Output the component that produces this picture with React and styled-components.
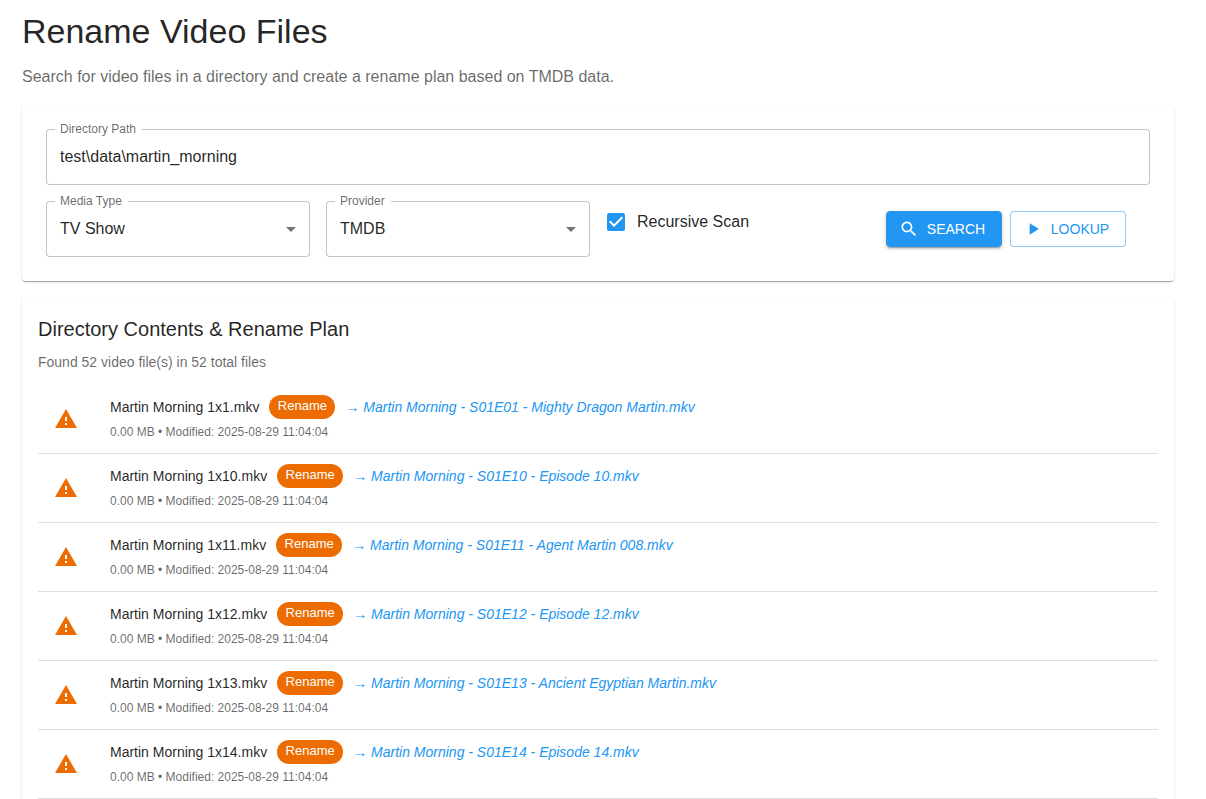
import React, { useState } from "react";
import styled, { createGlobalStyle } from "styled-components";

const PageStyle = createGlobalStyle`
  *, *::before, *::after { box-sizing: border-box; }
  body {
    margin: 0;
    background: #fff;
    color: rgba(0, 0, 0, 0.87);
    font-family: "Liberation Sans", Arial, Helvetica, sans-serif;
    font-size: 16px;
    line-height: 24px;
  }
`;

const Page = styled.main`
  display: flex;
  flex-direction: column;
  gap: 16px;
  padding: 10px 32px 24px 22px;
`;

const Header = styled.header`
  display: flex;
  flex-direction: column;
  gap: 13px;
`;

const Title = styled.h1`
  margin: 0;
  font-size: 34px;
  font-weight: 400;
  line-height: 42px;
`;

const Intro = styled.p`
  margin: 0;
  color: rgba(0, 0, 0, 0.6);
`;

const Card = styled.section`
  padding: ${(p) => p.$padding};
  border-radius: 4px;
  background: #fff;
  box-shadow: 0 2px 1px -1px rgba(0, 0, 0, 0.2), 0 1px 1px 0 rgba(0, 0, 0, 0.14),
    0 1px 3px 0 rgba(0, 0, 0, 0.12);
`;

const SearchForm = styled.form`
  display: grid;
  grid-template-columns: repeat(4, minmax(0, 1fr));
  gap: 16px;
`;

const Field = styled.div`
  position: relative;
  display: flex;
  align-items: center;
  grid-column: ${(p) => (p.$wide ? "1 / -1" : "auto")};
`;

const FieldLabel = styled.label`
  position: absolute;
  top: -8px;
  left: 9px;
  padding: 0 6px 0 5px;
  background: #fff;
  color: rgba(0, 0, 0, 0.6);
  font-size: 12px;
  line-height: 16px;
`;

const TextInput = styled.input`
  width: 100%;
  height: 56px;
  padding: 0 13px;
  border: 1px solid rgba(0, 0, 0, 0.23);
  border-radius: 4px;
  background: #fff;
  color: inherit;
  font: inherit;
`;

const SelectInput = styled(TextInput)`
  padding-right: 32px;
  appearance: none;
`;

const SelectArrow = styled.svg`
  position: absolute;
  right: 7px;
  width: 24px;
  height: 24px;
  fill: rgba(0, 0, 0, 0.54);
  pointer-events: none;
`;

const CheckLabel = styled.label`
  display: flex;
  align-items: center;
  align-self: start;
  gap: 12px;
  height: 42px;
  padding-left: 1px;
`;

const CheckBox = styled.span`
  position: relative;
  display: flex;
`;

const CheckInput = styled.input`
  width: 18px;
  height: 18px;
  margin: 0;
  border: 2px solid rgba(0, 0, 0, 0.6);
  border-radius: 2px;
  appearance: none;
  &:checked {
    border-color: #2196f3;
    background: #2196f3;
  }
`;

const CheckMark = styled.svg`
  position: absolute;
  inset: 0;
  fill: #fff;
  pointer-events: none;
`;

const Actions = styled.div`
  display: flex;
  align-items: center;
  gap: 8px;
`;

const ActionButton = styled.button`
  display: flex;
  align-items: center;
  justify-content: center;
  gap: 8px;
  min-width: 116px;
  height: 36px;
  padding: 0 15px 0 11px;
  border: 1px solid ${(p) => (p.$filled ? "#2196f3" : "rgba(33, 150, 243, 0.5)")};
  border-radius: 4px;
  background: ${(p) => (p.$filled ? "#2196f3" : "#fff")};
  color: ${(p) => (p.$filled ? "#fff" : "#2196f3")};
  box-shadow: ${(p) =>
    p.$filled
      ? "0 3px 1px -2px rgba(0,0,0,0.2), 0 2px 2px 0 rgba(0,0,0,0.14), 0 1px 5px 0 rgba(0,0,0,0.12)"
      : "none"};
  font-family: inherit;
  font-size: 14px;
  line-height: 24px;
  text-transform: uppercase;
`;

const ButtonIcon = styled.svg`
  flex: none;
  width: 20px;
  height: 20px;
  fill: currentColor;
`;

const PlanHeader = styled.div`
  display: flex;
  flex-direction: column;
  gap: 7px;
`;

const PlanTitle = styled.h2`
  margin: 0;
  font-size: 20px;
  font-weight: 400;
  line-height: 32px;
`;

const PlanSummary = styled.p`
  margin: 0;
  color: rgba(0, 0, 0, 0.6);
  font-size: 14px;
  line-height: 20px;
`;

const FileList = styled.ul`
  margin: 0;
  padding: 13px 0 8px;
  list-style: none;
`;

const FileRow = styled.li`
  display: flex;
  align-items: center;
  gap: 32px;
  padding: 10px 16px 11px;
  border-bottom: 1px solid rgba(0, 0, 0, 0.12);
`;

const WarningIcon = styled.svg`
  flex: none;
  width: 24px;
  height: 24px;
  fill: #ed6c02;
`;

const FileDetails = styled.div`
  display: flex;
  flex-direction: column;
  gap: 3px;
`;

const FileLine = styled.div`
  display: flex;
  align-items: center;
  gap: 10px;
  height: 24px;
  font-size: 14px;
`;

const Chip = styled.span`
  min-width: 66px;
  height: 24px;
  padding: 0 8px;
  border-radius: 12px;
  background: #ed6c02;
  color: #fff;
  font-size: 13px;
  line-height: 22px;
  text-align: center;
`;

const NewName = styled.span`
  color: #2196f3;
  font-style: italic;
`;

const Arrow = styled.span`
  font-family: "Liberation Serif", "Times New Roman", serif;
  font-style: normal;
`;

const FileMeta = styled.span`
  color: rgba(0, 0, 0, 0.6);
  font-size: 12px;
  line-height: 20px;
`;

const files = [
  ["Martin Morning 1x1.mkv", "Martin Morning - S01E01 - Mighty Dragon Martin.mkv"],
  ["Martin Morning 1x10.mkv", "Martin Morning - S01E10 - Episode 10.mkv"],
  ["Martin Morning 1x11.mkv", "Martin Morning - S01E11 - Agent Martin 008.mkv"],
  ["Martin Morning 1x12.mkv", "Martin Morning - S01E12 - Episode 12.mkv"],
  ["Martin Morning 1x13.mkv", "Martin Morning - S01E13 - Ancient Egyptian Martin.mkv"],
  ["Martin Morning 1x14.mkv", "Martin Morning - S01E14 - Episode 14.mkv"],
];

function SelectField({ id, label, options }) {
  return (
    <Field>
      <SelectInput as="select" id={id} defaultValue={options[0]}>
        {options.map((option) => (
          <option key={option}>{option}</option>
        ))}
      </SelectInput>
      <SelectArrow viewBox="0 0 24 24" aria-hidden="true">
        <path d="M7 10l5 5 5-5z" />
      </SelectArrow>
      <FieldLabel htmlFor={id}>{label}</FieldLabel>
    </Field>
  );
}

function FileItem({ name, newName }) {
  return (
    <FileRow>
      <WarningIcon viewBox="0 0 24 24" aria-hidden="true">
        <path d="M1 21h22L12 2 1 21zm12-3h-2v-2h2v2zm0-4h-2v-4h2v4z" />
      </WarningIcon>
      <FileDetails>
        <FileLine>
          <span>{name}</span>
          <Chip>Rename</Chip>
          <NewName>
            <Arrow>→</Arrow> {newName}
          </NewName>
        </FileLine>
        <FileMeta>0.00 MB • Modified: 2025-08-29 11:04:04</FileMeta>
      </FileDetails>
    </FileRow>
  );
}

export default function App() {
  const [path, setPath] = useState("test\\data\\martin_morning");
  const [recursive, setRecursive] = useState(true);

  return (
    <>
      <PageStyle />
      <Page>
        <Header>
          <Title>Rename Video Files</Title>
          <Intro>
            Search for video files in a directory and create a rename plan based on TMDB data.
          </Intro>
        </Header>

        <Card $padding="24px">
          <SearchForm onSubmit={(e) => e.preventDefault()}>
            <Field $wide>
              <TextInput
                id="directory"
                type="text"
                value={path}
                onChange={(e) => setPath(e.target.value)}
              />
              <FieldLabel htmlFor="directory">Directory Path</FieldLabel>
            </Field>
            <SelectField id="media-type" label="Media Type" options={["TV Show"]} />
            <SelectField id="provider" label="Provider" options={["TMDB"]} />
            <CheckLabel>
              <CheckBox>
                <CheckInput
                  type="checkbox"
                  checked={recursive}
                  onChange={(e) => setRecursive(e.target.checked)}
                />
                {recursive && (
                  <CheckMark viewBox="3 3 18 18" aria-hidden="true">
                    <path d="M10 17l-5-5 1.41-1.41L10 14.17l7.59-7.59L19 8l-9 9z" />
                  </CheckMark>
                )}
              </CheckBox>
              Recursive Scan
            </CheckLabel>
            <Actions>
              <ActionButton type="submit" $filled>
                <ButtonIcon viewBox="0 0 24 24" aria-hidden="true">
                  <path d="M15.5 14h-.79l-.28-.27C15.41 12.59 16 11.11 16 9.5 16 5.91 13.09 3 9.5 3S3 5.91 3 9.5 5.91 16 9.5 16c1.61 0 3.09-.59 4.23-1.57l.27.28v.79l5 4.99L20.49 19l-4.99-5zm-6 0C7.01 14 5 11.99 5 9.5S7.01 5 9.5 5 14 7.01 14 9.5 11.99 14 9.5 14z" />
                </ButtonIcon>
                Search
              </ActionButton>
              <ActionButton type="button">
                <ButtonIcon viewBox="0 0 24 24" aria-hidden="true">
                  <path d="M8 5v14l11-7z" />
                </ButtonIcon>
                Lookup
              </ActionButton>
            </Actions>
          </SearchForm>
        </Card>

        <Card $padding="16px">
          <PlanHeader>
            <PlanTitle>Directory Contents &amp; Rename Plan</PlanTitle>
            <PlanSummary>Found 52 video file(s) in 52 total files</PlanSummary>
          </PlanHeader>
          <FileList>
            {files.map(([name, newName]) => (
              <FileItem key={name} name={name} newName={newName} />
            ))}
          </FileList>
        </Card>
      </Page>
    </>
  );
}
